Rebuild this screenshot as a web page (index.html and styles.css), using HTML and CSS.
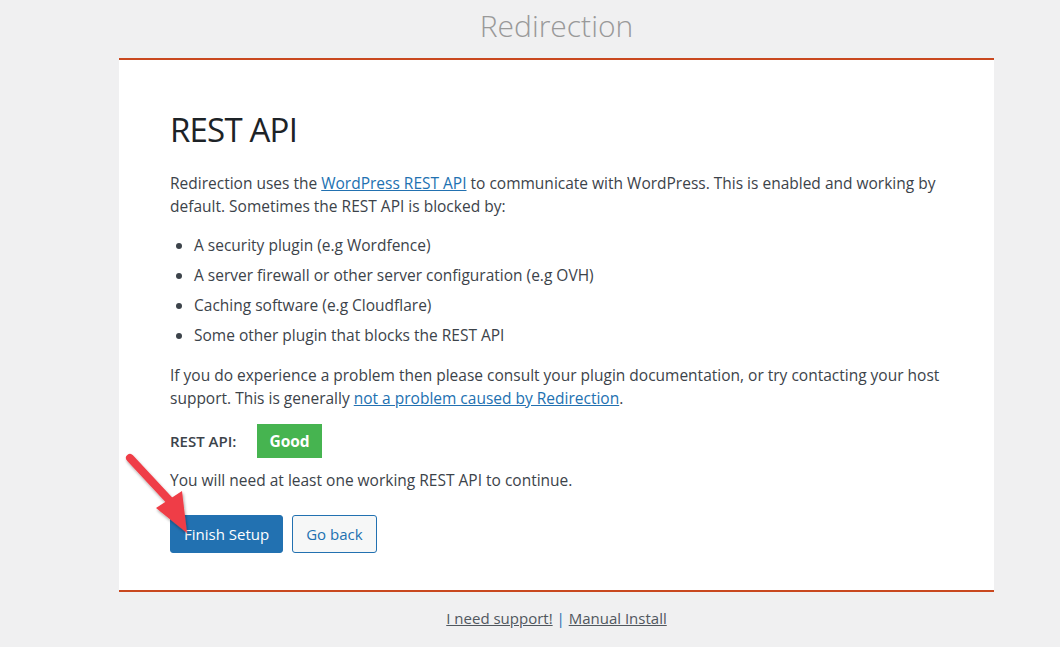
FILE: index.html
```html
<!DOCTYPE html>
<html lang="en">
<head>
    <meta charset="UTF-8">
    <title>Redirection - REST API</title>
    <link rel="stylesheet" href="styles.css">
</head>
<body>

<div class="wrap">
    <h1 class="brand">Redirection</h1>

    <div class="card">
        <h2>REST API</h2>

        <p class="intro">Redirection uses the <a href="#">WordPress REST API</a> to communicate with WordPress. This is enabled and working by default. Sometimes the REST API is blocked by:</p>

        <ul class="reasons">
            <li>A security plugin (e.g Wordfence)</li>
            <li>A server firewall or other server configuration (e.g OVH)</li>
            <li>Caching software (e.g Cloudflare)</li>
            <li>Some other plugin that blocks the REST API</li>
        </ul>

        <p>If you do experience a problem then please consult your plugin documentation, or try contacting your host support. This is generally <a href="#">not a problem caused by Redirection</a>.</p>

        <div class="status">
            <span class="status-label">REST API:</span>
            <span class="badge">Good</span>
        </div>

        <p>You will need at least one working REST API to continue.</p>

        <div class="actions">
            <button class="btn btn-primary">Finish Setup</button>
            <button class="btn btn-secondary">Go back</button>
            <svg class="arrow" width="80" height="95" viewBox="0 0 80 95">
                <defs>
                    <filter id="shadow" x="-20%" y="-20%" width="140%" height="140%">
                        <feDropShadow dx="1" dy="2" stdDeviation="1.5" flood-color="#000" flood-opacity="0.35"/>
                    </filter>
                </defs>
                <g filter="url(#shadow)">
                    <line x1="10" y1="9" x2="50" y2="52" stroke="#ef3e46" stroke-width="8" stroke-linecap="round"/>
                    <polygon points="36,59 62,42 67,84" fill="#ef3e46"/>
                </g>
            </svg>
        </div>
    </div>

    <div class="footer">
        <a href="#">I need support!</a> <span class="sep">|</span> <a href="#">Manual Install</a>
    </div>
</div>

</body>
</html>
```

FILE: styles.css
```css
body {
    margin: 0;
    padding: 0;
    background-color: #f0f0f1;
    color: #3c434a;
    font-family: "Open Sans", "Noto Sans", sans-serif;
    font-size: 15.5px;
}

.wrap {
    width: 875px;
    margin-left: 119px;
}

.brand {
    margin: 0;
    padding-top: 7px;
    height: 58px;
    box-sizing: border-box;
    text-align: center;
    font-size: 30px;
    font-weight: 300;
    line-height: 38px;
    color: #999;
}

.card {
    background: white;
    border-top: 2px solid #c9481f;
    border-bottom: 2px solid #c9481f;
    padding: 50px 51px 37px;
    box-sizing: border-box;
    height: 534px;
}

.card h2 {
    margin: 0 0 22px;
    font-size: 33px;
    font-weight: 400;
    letter-spacing: -0.8px;
    line-height: 40px;
    color: #1d2327;
}

.card p {
    margin: 0 0 14px;
    line-height: 23px;
}

.card p.intro {
    margin-bottom: 16px;
}

.card a {
    color: #2271b1;
}

.reasons {
    margin: 0 0 17px;
    padding-left: 24px;
}

.reasons li {
    line-height: 23px;
    margin-bottom: 7px;
}

.status {
    display: flex;
    align-items: center;
    gap: 21px;
    margin-bottom: 11px;
}

.status-label {
    font-weight: 600;
    font-size: 15px;
}

.badge {
    background: #46b450;
    color: white;
    font-weight: 700;
    padding: 0 12px;
    line-height: 34px;
}

.actions {
    position: relative;
    display: flex;
    gap: 9px;
    margin-top: 23px;
}

.btn {
    font-family: inherit;
    font-size: 15px;
    height: 38px;
    padding: 0 13px;
    border-radius: 3px;
    cursor: pointer;
}

.btn-primary {
    background: #2271b1;
    border: 1px solid #2271b1;
    color: white;
}

.btn-secondary {
    background: #f6f7f7;
    border: 1px solid #2271b1;
    color: #2271b1;
}

.arrow {
    position: absolute;
    left: -50px;
    top: -66px;
}

.footer {
    text-align: center;
    padding-top: 16px;
    font-size: 15px;
}

.footer a {
    color: #50575e;
}

.sep {
    color: #2271b1;
}
```
